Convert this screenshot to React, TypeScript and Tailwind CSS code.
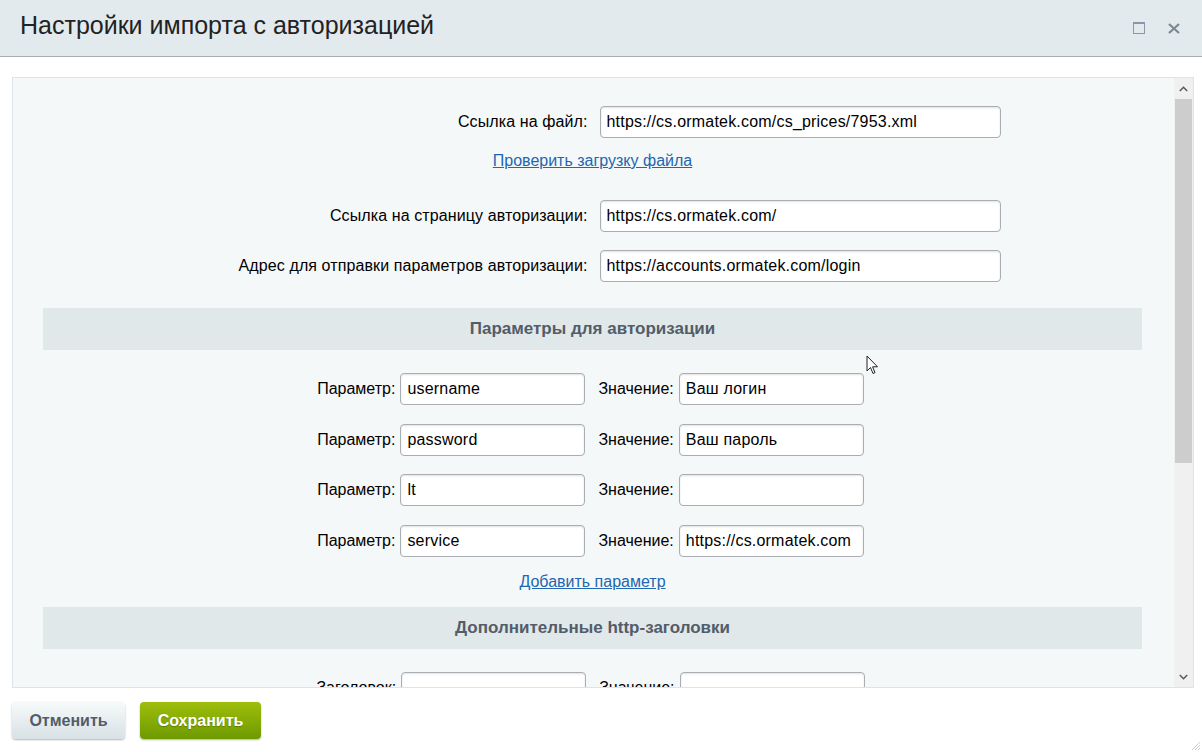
import React from "react";

const inputCls =
  "h-[32px] bg-white border border-[#a9aeb3] rounded-[4px] shadow-[inset_0_1px_2px_rgba(0,0,0,0.12)] px-[6px] text-[16px] tracking-[0.2px] text-black outline-none";

function Field({ label, value }: { label: string; value: string }) {
  return (
    <div className="grid grid-cols-2 items-center">
      <div className="text-right pr-[5px] text-[16px] tracking-[0.1px] text-black">{label}</div>
      <div className="pl-[7px]">
        <input readOnly value={value} className={inputCls + " w-[401px]"} />
      </div>
    </div>
  );
}

function ParamRow({ p, v, label = "Параметр:" }: { p: string; v: string; label?: string }) {
  return (
    <div className="flex items-center justify-center pr-[4px]">
      <span className="text-[16px] text-black mr-[5px]">{label}</span>
      <input readOnly value={p} className={inputCls + " w-[185px]"} />
      <span className="text-[16px] text-black ml-[13px] mr-[5px]">Значение:</span>
      <input readOnly value={v} className={inputCls + " w-[185px]"} />
    </div>
  );
}

function SectionBar({ title }: { title: string }) {
  return (
    <div className="h-[42px] bg-[#e0e8ea] flex items-center justify-center pb-[1px] text-[17px] font-bold text-[#535c69]">
      {title}
    </div>
  );
}

export default function App() {
  return (
    <div className="relative w-[1202px] h-[752px] bg-white flex flex-col overflow-hidden font-['Liberation_Sans',Arial,sans-serif]">
      {/* header */}
      <div className="h-[57px] shrink-0 bg-[#e2eaed] border-b border-[#a9adaf] flex items-center pl-[20px] pr-[22px] pb-[4px]">
        <div className="flex-1 text-[25px] text-[#222]">Настройки импорта с авторизацией</div>
        <div className="flex items-center gap-[23px] pt-[4px]">
          <div className="w-[12px] h-[12px] border border-[#8b97a6] border-t-[2px]" />
          <svg width="12" height="11" viewBox="0 0 12 11">
            <path d="M1 1 L11 10 M11 1 L1 10" stroke="#7b8793" strokeWidth="2.2" />
          </svg>
        </div>
      </div>

      {/* panel */}
      <div className="mt-[20px] ml-[12px] mr-[8px] h-[611px] shrink-0 border border-[#dce4e7] bg-[#f5f8f9] flex">
        <div className="flex-1 overflow-hidden pl-[30px] pr-[31px] pt-[28px]">
          <Field label="Ссылка на файл:" value="https://cs.ormatek.com/cs_prices/7953.xml" />
          <div className="mt-[14px] text-center text-[16px] leading-[18px]">
            <a className="text-[#2067b0] underline">Проверить загрузку файла</a>
          </div>
          <div className="mt-[30px]">
            <Field label="Ссылка на страницу авторизации:" value="https://cs.ormatek.com/" />
          </div>
          <div className="mt-[18px]">
            <Field label="Адрес для отправки параметров авторизации:" value="https://accounts.ormatek.com/login" />
          </div>
          <div className="mt-[26px]">
            <SectionBar title="Параметры для авторизации" />
          </div>
          <div className="mt-[23px]">
            <ParamRow p="username" v="Ваш логин" />
          </div>
          <div className="mt-[19px]">
            <ParamRow p="password" v="Ваш пароль" />
          </div>
          <div className="mt-[18px]">
            <ParamRow p="lt" v="" />
          </div>
          <div className="mt-[19px]">
            <ParamRow p="service" v="https://cs.ormatek.com" />
          </div>
          <div className="mt-[16px] text-center text-[16px] leading-[18px]">
            <a className="text-[#2067b0] underline">Добавить параметр</a>
          </div>
          <div className="mt-[16px]">
            <SectionBar title="Дополнительные http-заголовки" />
          </div>
          <div className="mt-[23px]">
            <ParamRow p="" v="" label="Заголовок:" />
          </div>
        </div>
        {/* scrollbar */}
        <div className="w-[20px] shrink-0 bg-[#f0f0f0] flex flex-col border-l border-[#f8f8f8]">
          <div className="h-[21px] flex items-center justify-center">
            <svg width="9" height="6" viewBox="0 0 9 6">
              <path d="M0.8 5 L4.5 1.3 L8.2 5" stroke="#5a5a5a" strokeWidth="1.6" fill="none" />
            </svg>
          </div>
          <div className="h-[364px] mx-[1px] bg-[#cdcdcd]" />
          <div className="flex-1" />
          <div className="h-[20px] flex items-center justify-center">
            <svg width="9" height="6" viewBox="0 0 9 6">
              <path d="M0.8 1 L4.5 4.7 L8.2 1" stroke="#5a5a5a" strokeWidth="1.6" fill="none" />
            </svg>
          </div>
        </div>
      </div>

      {/* footer */}
      <div className="flex gap-[15px] pl-[12px] pt-[14px]">
        <button className="w-[113px] h-[37px] rounded-[4px] bg-gradient-to-b from-[#f7fafa] to-[#d8e1e5] shadow-[0_1px_2px_rgba(0,0,0,0.3)] text-[16px] font-bold text-[#535c69]">
          Отменить
        </button>
        <button className="w-[121px] h-[37px] rounded-[4px] bg-gradient-to-b from-[#9ebe0c] to-[#6e9a00] shadow-[0_1px_2px_rgba(0,0,0,0.3)] text-[16px] font-bold text-white [text-shadow:0_1px_1px_rgba(0,0,0,0.25)]">
          Сохранить
        </button>
      </div>

      {/* mouse cursor */}
      <svg className="absolute left-[866px] top-[355px]" width="13" height="21" viewBox="0 0 13 21">
        <path d="M1 1 L1 16 L4.5 12.5 L7 18.5 L9 17.6 L6.6 11.8 L11.5 11.8 Z" fill="white" stroke="#222" strokeWidth="1" strokeLinejoin="round" />
      </svg>

      {/* resize grip */}
      <svg className="absolute right-[1px] bottom-[1px]" width="12" height="12" viewBox="0 0 12 12">
        <path d="M11 3 L3 11 M11 6 L6 11 M11 9 L9 11" stroke="#c8cccf" strokeWidth="1" />
      </svg>
    </div>
  );
}
